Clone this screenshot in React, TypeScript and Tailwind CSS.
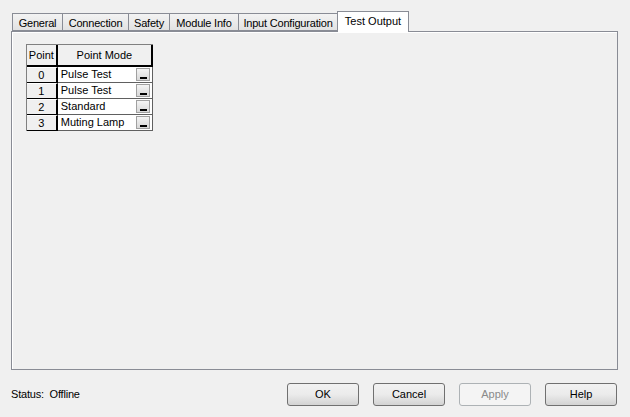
import React from "react";

const tabs = [
  { label: "General", w: 50 },
  { label: "Connection", w: 66 },
  { label: "Safety", w: 41 },
  { label: "Module Info", w: 69 },
  { label: "Input Configuration", w: 99 },
];

const rows = [
  { n: "0", mode: "Pulse Test" },
  { n: "1", mode: "Pulse Test" },
  { n: "2", mode: "Standard" },
  { n: "3", mode: "Muting Lamp" },
];

function DropBtn() {
  return (
    <div className="absolute right-[2px] top-[1px] w-[14px] h-[13px] border border-[#a0a0a0] bg-gradient-to-b from-[#f4f4f4] to-[#d8d8d8] flex items-end justify-center pb-[1px]">
      <div className="w-[7px] h-[2px] bg-black" />
    </div>
  );
}

function Btn({ label, disabled }: { label: string; disabled?: boolean }) {
  return (
    <div
      className={
        disabled
          ? "w-[72px] h-[23px] rounded-[3px] border border-[#adb2b5] bg-[#f4f4f4] text-[#8a8a8a] flex items-center justify-center"
          : "w-[72px] h-[23px] rounded-[3px] border border-[#707070] bg-gradient-to-b from-[#f2f2f2] via-[#ebebeb] to-[#d3d3d3] text-black flex items-center justify-center"
      }
    >
      {label}
    </div>
  );
}

export default function App() {
  return (
    <div
      className="w-[630px] h-[417px] bg-[#f0f0f0] text-black text-[11px] leading-none overflow-hidden"
      style={{ fontFamily: '"Liberation Sans", Arial, sans-serif' }}
    >
      {/* Tabs */}
      <div className="flex items-end pl-[12px] pt-[11px] h-[32px]">
        {tabs.map((t) => (
          <div
            key={t.label}
            className="h-[18px] mb-[1px] pt-[2px] border border-[#898c95] border-r-0 bg-gradient-to-b from-[#f3f3f3] to-[#e2e2e2] flex items-center justify-center tracking-[-0.2px]"
            style={{ width: t.w }}
          >
            {t.label}
          </div>
        ))}
        <div className="relative z-10 h-[21px] w-[72px] border border-[#898c95] border-b-0 bg-white flex items-start justify-center pt-[4px]">
          Test Output
        </div>
      </div>

      {/* Panel */}
      <div className="ml-[11px] w-[607px] h-[339px] -mt-[1px] border border-[#898c95] bg-[#f0f0f0] relative">
        <div className="absolute inset-0 border-t border-l border-white pointer-events-none" />
        <div className="pt-[12px] pl-[14px]">
          <div className="w-[127px] border-t border-l border-[#808080]">
            {/* header */}
            <div className="flex h-[22px]">
              <div className="w-[31px] border-r-2 border-b-2 border-black bg-[#f0f0f0] flex items-center justify-center">
                Point
              </div>
              <div className="w-[96px] border-r-2 border-b-2 border-black bg-[#f0f0f0] flex items-center justify-center">
                Point Mode
              </div>
            </div>
            {rows.map((r) => (
              <div key={r.n} className="flex h-[16px]">
                <div className="w-[31px] border-r-2 border-b border-black bg-[#f0f0f0] border-t border-t-white flex items-center justify-center">
                  {r.n}
                </div>
                <div className="relative w-[96px] border-r border-b border-[#606060] bg-white flex items-center pl-[3px]">
                  {r.mode}
                  <DropBtn />
                </div>
              </div>
            ))}
          </div>
        </div>
      </div>

      {/* Footer */}
      <div className="flex items-center h-[23px] mt-[13px] pl-[11px] pr-[13px]">
        <div className="flex-1 tracking-[-0.2px]">Status:&nbsp; Offline</div>
        <div className="flex gap-[14px]">
          <Btn label="OK" />
          <Btn label="Cancel" />
          <Btn label="Apply" disabled />
          <Btn label="Help" />
        </div>
      </div>
    </div>
  );
}
